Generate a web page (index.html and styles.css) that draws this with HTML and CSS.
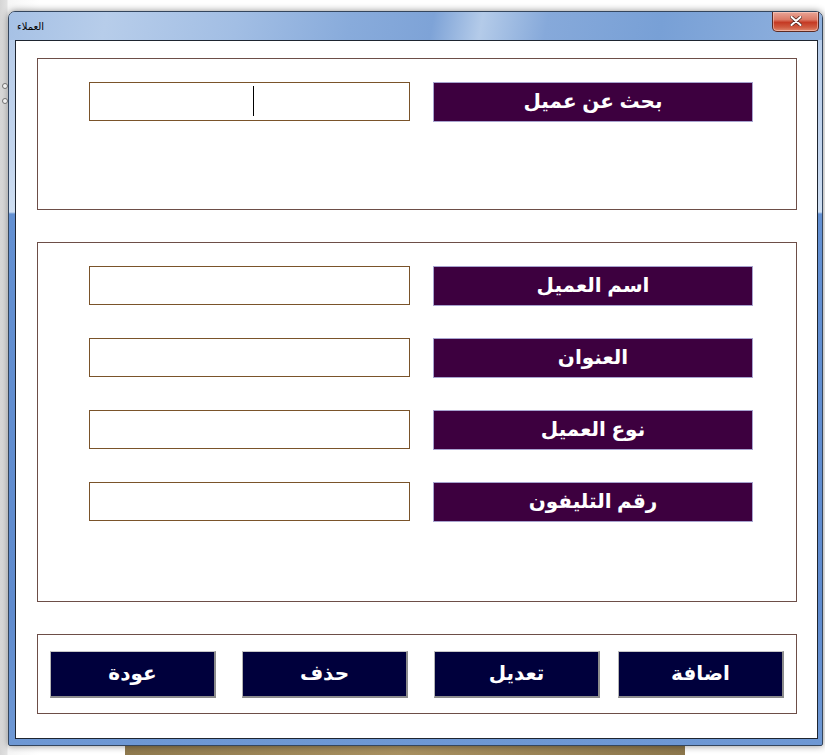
FILE: index.html
```html
<!DOCTYPE html>
<html lang="ar">
<head>
<meta charset="utf-8">
<title>العملاء</title>
<link rel="stylesheet" href="styles.css">
</head>
<body>
<div class="desktop">
  <span class="desk-icon desk-icon-1"></span>
  <span class="desk-icon desk-icon-2"></span>
  <div class="window">
    <div class="titlebar">
      <span class="title">العملاء</span>
      <span class="close">
        <svg width="12" height="10" viewBox="0 0 12 10">
          <path d="M1.5 1 L10.5 9 M10.5 1 L1.5 9" stroke="#5a2a22" stroke-width="3.6" stroke-linecap="round"/>
          <path d="M1.5 1 L10.5 9 M10.5 1 L1.5 9" stroke="#ffffff" stroke-width="2" stroke-linecap="round"/>
        </svg>
      </span>
    </div>
    <div class="client" dir="rtl">
      <section class="panel panel-search">
        <div class="row">
          <div class="label">بحث عن عميل</div>
          <div class="field field-active"><span class="caret"></span></div>
        </div>
      </section>
      <section class="panel panel-form">
        <div class="row">
          <div class="label">اسم العميل</div>
          <div class="field"></div>
        </div>
        <div class="row">
          <div class="label">العنوان</div>
          <div class="field"></div>
        </div>
        <div class="row">
          <div class="label">نوع العميل</div>
          <div class="field"></div>
        </div>
        <div class="row">
          <div class="label">رقم التليفون</div>
          <div class="field"></div>
        </div>
      </section>
      <section class="panel panel-actions">
        <button class="btn btn-add">اضافة</button>
        <button class="btn">تعديل</button>
        <button class="btn">حذف</button>
        <button class="btn">عودة</button>
      </section>
    </div>
  </div>
</div>
</body>
</html>
```

FILE: styles.css
```css
* {
  box-sizing: border-box;
}

html, body {
  margin: 0;
  padding: 0;
}

body {
  font-family: "Liberation Sans", "DejaVu Sans", sans-serif;
}

.desktop {
  position: relative;
  width: 825px;
  height: 755px;
  overflow: hidden;
  padding-top: 11px;
  padding-left: 8px;
  background:
    linear-gradient(to right, transparent 125px, #8f7a4e 125px, #a89060 400px, #8c774c 685px, transparent 685px) left bottom / 100% 10px no-repeat,
    linear-gradient(to right, #d6d6d6 0, #e2e2e2 7px, #f6f6f6 8px, #ffffff 40px);
}

.desk-icon {
  position: absolute;
  left: 2px;
  width: 6px;
  height: 6px;
  border-radius: 50%;
  border: 1.5px solid #707070;
  background: #f0f0f0;
}

.desk-icon-1 { top: 83px; }
.desk-icon-2 { top: 98px; }

.window {
  width: 815px;
  height: 735px;
  border: 1px solid #34465e;
  border-radius: 7px 7px 2px 2px;
  padding: 0 4px 6px 6px;
  background:
    linear-gradient(to bottom, #b4cae8 0, #c4d6ee 150px, #cfdff2 200px, #6390d2 202px, #5f8bce 600px, #6e98d4 100%);
  box-shadow: 0 0 7px rgba(0, 0, 0, 0.45);
}

.titlebar {
  height: 28px;
  margin: 0 -4px 0 -6px;
  padding: 0 3px 0 8px;
  display: flex;
  justify-content: space-between;
  align-items: flex-start;
  border-radius: 6px 6px 0 0;
  background: linear-gradient(100deg, #a6c1e5 0%, #b7cdea 12%, #a2bee4 28%, #88abdb 42%, #7ea3d7 52%, #b4cbe9 58%, #86a9da 66%, #78a0d6 80%, #90b1de 100%);
}

.title {
  align-self: center;
  margin-top: 1px;
  font-family: "DejaVu Sans", sans-serif;
  font-size: 10px;
  color: #000;
}

.close {
  width: 47px;
  height: 20px;
  display: flex;
  align-items: center;
  justify-content: center;
  padding-bottom: 2px;
  border: 1px solid #5b2a24;
  border-top: none;
  border-radius: 0 0 5px 5px;
  background: linear-gradient(to bottom, #e9a597 0%, #dc7a66 40%, #c53a24 55%, #cf5a40 80%, #e08a70 100%);
  box-shadow: inset 0 0 0 1px rgba(255, 220, 210, 0.5);
}

.client {
  height: 699px;
  border: 1px solid #1e2530;
  background: #ffffff;
  padding: 17px 20px 0 21px;
}

.panel {
  border: 1px solid #6d4e48;
}

.panel-search {
  height: 152px;
  margin-bottom: 32px;
  padding: 23px 43px 0 0;
}

.panel-form {
  height: 360px;
  margin-bottom: 32px;
  padding: 23px 43px 0 0;
  display: flex;
  flex-direction: column;
  gap: 32px;
}

.row {
  display: flex;
  align-items: flex-start;
  gap: 23px;
}

.label {
  width: 320px;
  height: 40px;
  background: #3d003f;
  border: 1px solid #a7a3cf;
  color: #ffffff;
  font-family: "Liberation Sans", "DejaVu Sans", sans-serif;
  font-weight: bold;
  font-size: 20px;
  line-height: 36px;
  text-align: center;
}

.field {
  position: relative;
  width: 321px;
  height: 39px;
  border: 1px solid #7a532a;
  background: #ffffff;
}

.caret {
  position: absolute;
  left: 163px;
  top: 3px;
  width: 1px;
  height: 30px;
  background: #000000;
}

.panel-actions {
  height: 80px;
  padding: 16px 12px 0 0;
  display: flex;
  align-items: flex-start;
  gap: 26px;
}

.btn {
  width: 166px;
  height: 47px;
  margin: 0;
  padding: 0 0 3px 0;
  background: #00003c;
  border: 1px solid;
  border-color: #c8c8c8 #8c8c8c #8c8c8c #b4b4b4;
  border-bottom-width: 2px;
  border-right-width: 2px;
  color: #ffffff;
  font-family: "Liberation Sans", "DejaVu Sans", sans-serif;
  font-weight: bold;
  font-size: 20px;
  text-align: center;
}

.btn-add {
  margin-left: -8px;
}
```
